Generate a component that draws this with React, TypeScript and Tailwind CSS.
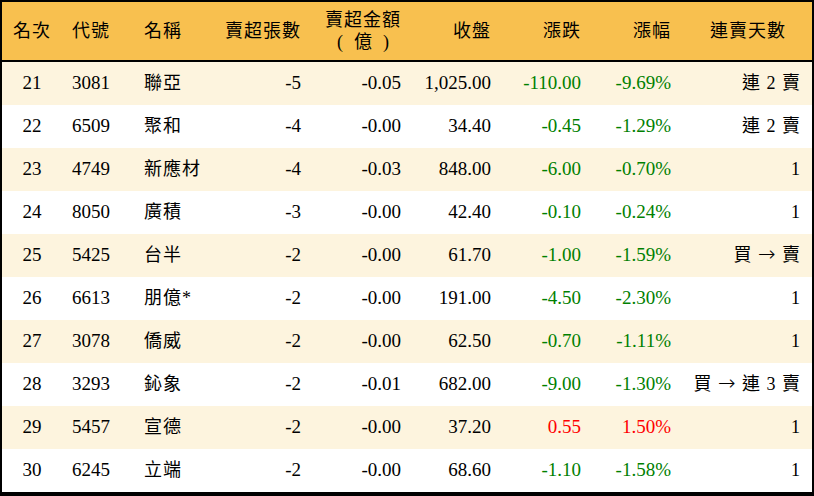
const rows = [
  { rank: 21, code: "3081", name: "聯亞", lots: "-5", amt: "-0.05", close: "1,025.00", chg: "-110.00", pct: "-9.69%", streak: "連 2 賣" },
  { rank: 22, code: "6509", name: "聚和", lots: "-4", amt: "-0.00", close: "34.40", chg: "-0.45", pct: "-1.29%", streak: "連 2 賣" },
  { rank: 23, code: "4749", name: "新應材", lots: "-4", amt: "-0.03", close: "848.00", chg: "-6.00", pct: "-0.70%", streak: "1" },
  { rank: 24, code: "8050", name: "廣積", lots: "-3", amt: "-0.00", close: "42.40", chg: "-0.10", pct: "-0.24%", streak: "1" },
  { rank: 25, code: "5425", name: "台半", lots: "-2", amt: "-0.00", close: "61.70", chg: "-1.00", pct: "-1.59%", streak: "買 → 賣" },
  { rank: 26, code: "6613", name: "朋億*", lots: "-2", amt: "-0.00", close: "191.00", chg: "-4.50", pct: "-2.30%", streak: "1" },
  { rank: 27, code: "3078", name: "僑威", lots: "-2", amt: "-0.00", close: "62.50", chg: "-0.70", pct: "-1.11%", streak: "1" },
  { rank: 28, code: "3293", name: "鈊象", lots: "-2", amt: "-0.01", close: "682.00", chg: "-9.00", pct: "-1.30%", streak: "買 → 連 3 賣" },
  { rank: 29, code: "5457", name: "宣德", lots: "-2", amt: "-0.00", close: "37.20", chg: "0.55", pct: "1.50%", streak: "1" },
  { rank: 30, code: "6245", name: "立端", lots: "-2", amt: "-0.00", close: "68.60", chg: "-1.10", pct: "-1.58%", streak: "1" },
];

const cols = "grid grid-cols-[60px_72px_82px_95px_100px_90px_90px_90px_1fr]";
const cjk = "text-[18px] tracking-[1px]";

function Streak({ text }: { text: string }) {
  // split around the arrow so it can be drawn a bit longer
  const parts = text.split("→");
  return (
    <span className="[word-spacing:2px]">
      {parts.map((p, i) => (
        <span key={i}>
          {i > 0 && (
            <span className="font-['DejaVu_Sans'] text-[21px] font-light leading-none">→</span>
          )}
          {p}
        </span>
      ))}
    </span>
  );
}

export default function App() {
  return (
    <div
      className="w-[814px] h-[496px] flex flex-col border-t-2 border-l-2 border-r-2 border-b-4 border-black bg-white text-black"
      style={{ fontFamily: '"Liberation Serif", "Noto Sans CJK TC", serif' }}
    >
      <div className={`${cols} h-[60px] shrink-0 items-center bg-[#F8C04F] border-b-2 border-black ${cjk}`}>
        <div className="text-center">名次</div>
        <div className="pl-[10px]">代號</div>
        <div className="pl-[10px]">名稱</div>
        <div className="text-right pr-[10px]">賣超張數</div>
        <div className="flex justify-end pr-[10px]">
          <div className="flex flex-col items-center leading-[22px]">
            <span>賣超金額</span>
            <span className="flex gap-[11px] tracking-normal">
              <span>(</span>
              <span>億</span>
              <span>)</span>
            </span>
          </div>
        </div>
        <div className="text-right pr-[10px]">收盤</div>
        <div className="text-right pr-[10px]">漲跌</div>
        <div className="text-right pr-[10px]">漲幅</div>
        <div className="text-right pr-[26px]">連賣天數</div>
      </div>

      <div className="flex-1 grid grid-rows-10">
        {rows.map((r, i) => {
          const up = !r.chg.startsWith("-");
          const color = up ? "text-[#FF0000]" : "text-[#008000]";
          return (
            <div
              key={r.rank}
              className={`${cols} items-center text-[19px] ${i % 2 === 0 ? "bg-[#FDF4DE]" : "bg-white"}`}
            >
              <div className="text-center">{r.rank}</div>
              <div className="pl-[10px]">{r.code}</div>
              <div className={`pl-[10px] ${cjk}`}>{r.name}</div>
              <div className="text-right pr-[10px]">{r.lots}</div>
              <div className="text-right pr-[10px]">{r.amt}</div>
              <div className="text-right pr-[10px]">{r.close}</div>
              <div className={`text-right pr-[10px] ${color}`}>{r.chg}</div>
              <div className={`text-right pr-[10px] ${color}`}>{r.pct}</div>
              <div className="text-right pr-[12px] text-[18px]">
                <Streak text={r.streak} />
              </div>
            </div>
          );
        })}
      </div>
    </div>
  );
}
